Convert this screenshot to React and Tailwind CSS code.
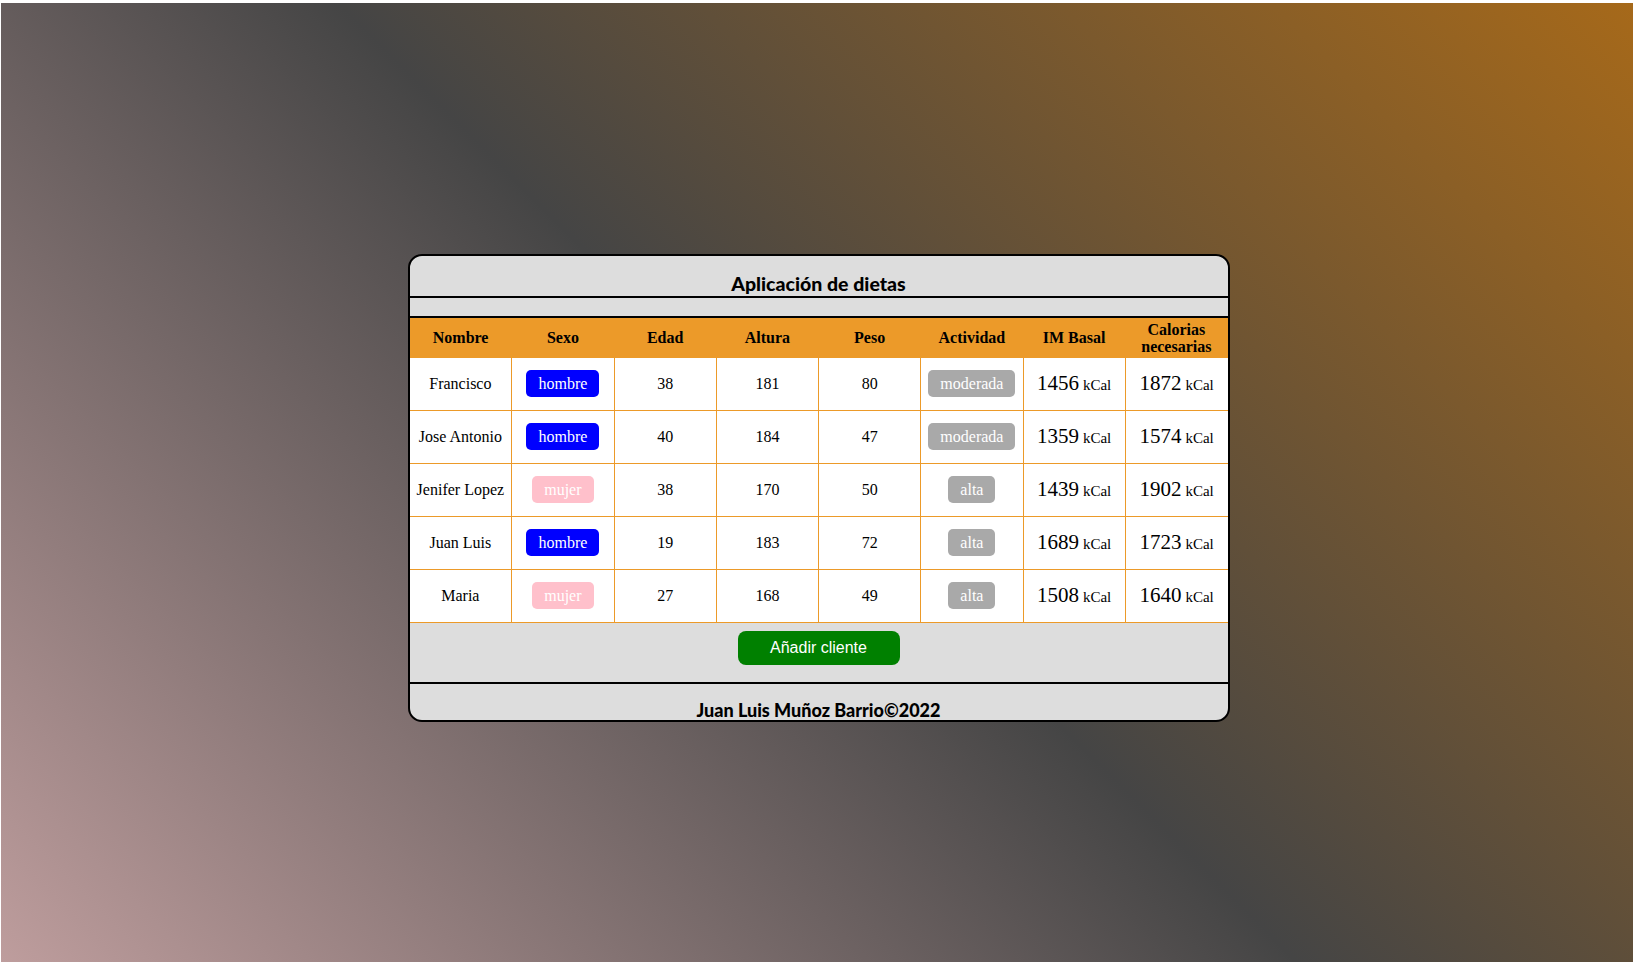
import React from 'react';

const clientes = [
  { nombre: 'Francisco', sexo: 'hombre', edad: 38, altura: 181, peso: 80, actividad: 'moderada', basal: 1456, calorias: 1872 },
  { nombre: 'Jose Antonio', sexo: 'hombre', edad: 40, altura: 184, peso: 47, actividad: 'moderada', basal: 1359, calorias: 1574 },
  { nombre: 'Jenifer Lopez', sexo: 'mujer', edad: 38, altura: 170, peso: 50, actividad: 'alta', basal: 1439, calorias: 1902 },
  { nombre: 'Juan Luis', sexo: 'hombre', edad: 19, altura: 183, peso: 72, actividad: 'alta', basal: 1689, calorias: 1723 },
  { nombre: 'Maria', sexo: 'mujer', edad: 27, altura: 168, peso: 49, actividad: 'alta', basal: 1508, calorias: 1640 },
];

const headers = ['Nombre', 'Sexo', 'Edad', 'Altura', 'Peso', 'Actividad', 'IM Basal', 'Calorias necesarias'];

const Badge = ({ color, children }) => (
  <span className={`inline-flex h-[27px] items-center rounded-[5px] px-3 text-white ${color}`}>
    {children}
  </span>
);

const Kcal = ({ value }) => (
  <span>
    <span className="text-[21px]">{value}</span> <span className="text-[15px]">kCal</span>
  </span>
);

const App = () => {
  const cell = 'h-[53px] border border-[#ec9a29] p-0 text-center align-middle';

  return (
    <div className="bg-white pl-[1px] pt-[3px]">
      <div className="flex min-h-[959px] items-center justify-center bg-[linear-gradient(45deg,#be9d9d_0%,#454545_50%,#a6691a_100%)] pl-[3px] pt-[11px]">
        <div className="w-[822px] overflow-hidden rounded-[14px] border-2 border-black bg-[#dddddd]">
          {/* Cabecera */}
          <div className="h-[40px] pt-[18px] text-center font-['Lato',sans-serif] text-[19.5px] font-black leading-[20px] text-black">
            Aplicación de dietas
          </div>
          <div className="h-[22px] border-y-2 border-black" />

          <table className="w-full table-fixed border-collapse bg-white font-['Liberation_Serif',serif] text-[16px] text-black">
            <thead>
              <tr className="bg-[#ec9a29]">
                {headers.map((h) => (
                  <th key={h} className="h-[39px] px-1 text-center align-middle font-bold leading-[17px]">
                    {h}
                  </th>
                ))}
              </tr>
            </thead>
            <tbody>
              {clientes.map((c) => (
                <tr key={c.nombre}>
                  <td className={`${cell} border-l-0`}>{c.nombre}</td>
                  <td className={cell}>
                    <Badge color={c.sexo === 'hombre' ? 'bg-[#0000ff]' : 'bg-[#ffc0cb]'}>{c.sexo}</Badge>
                  </td>
                  <td className={cell}>{c.edad}</td>
                  <td className={cell}>{c.altura}</td>
                  <td className={cell}>{c.peso}</td>
                  <td className={cell}>
                    <Badge color="bg-[#a9a9a9]">{c.actividad}</Badge>
                  </td>
                  <td className={cell}>
                    <Kcal value={c.basal} />
                  </td>
                  <td className={`${cell} border-r-0`}>
                    <Kcal value={c.calorias} />
                  </td>
                </tr>
              ))}
            </tbody>
          </table>

          <div className="flex h-[59px] justify-center pt-[8px]">
            <button className="h-[34px] w-[162px] rounded-[8px] bg-[#008000] font-['Liberation_Sans',sans-serif] text-[16px] text-white">
              Añadir cliente
            </button>
          </div>

          {/* Pie */}
          <div className="h-[38px] overflow-hidden border-t-2 border-black text-center font-['Lato',sans-serif] text-[18px] font-black leading-[19px] text-black">
            <div className="mt-[17px]">Juan Luis Muñoz Barrio©2022</div>
          </div>
        </div>
      </div>
    </div>
  );
};

export default App;
